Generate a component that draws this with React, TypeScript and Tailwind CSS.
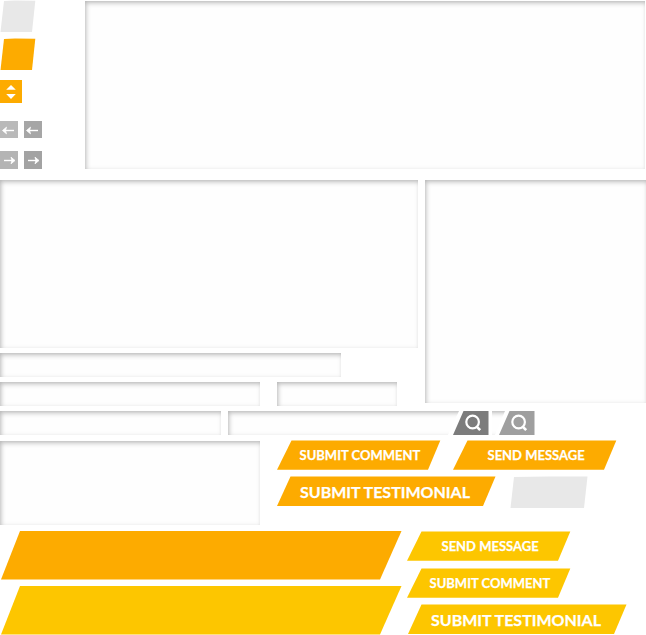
import React from 'react';

function Panel({ className }: { className: string }) {
  return (
    <div
      className={`shrink-0 bg-[#fefefe] shadow-[inset_2px_3px_5px_-1px_rgba(0,0,0,0.24),inset_0_0_4px_rgba(0,0,0,0.08)] ${className}`}
    />
  );
}

function SlantButton({ className, children }: { className: string; children?: React.ReactNode }) {
  return (
    <div className={`shrink-0 whitespace-nowrap text-white font-bold [-webkit-text-stroke:0.25px_white] ${className}`}>{children}</div>
  );
}

function Arrow({ className, right }: { className: string; right?: boolean }) {
  return (
    <div className={`h-[17.5px] w-[18px] shrink-0 ${className}`}>
      <svg width="18" height="18" viewBox="0 0 18 18" fill="none" stroke="white" strokeWidth="1.4">
        {right ? (
          <>
            <path d="M4 9.5h9" />
            <path d="M11 6.2l4 3.3-4 3.3 1-3.3z" fill="white" strokeWidth="0.8" />
          </>
        ) : (
          <>
            <path d="M5 9.5h9" />
            <path d="M6.5 6.2L2.5 9.5l4 3.3-1-3.3z" fill="white" strokeWidth="0.8" />
          </>
        )}
      </svg>
    </div>
  );
}

function Search({ className }: { className: string }) {
  return (
    <div className={`h-6 w-9 shrink-0 [clip-path:polygon(10.5px_0,35.5px_0,35.5px_100%,0_100%)] ${className}`}>
      <svg width="36" height="24" viewBox="0 0 36 24" fill="none" stroke="white">
        <circle cx="19.6" cy="11" r="6.3" strokeWidth="2.2" />
        <path d="M23.5 15.5l3.7 3.7" strokeWidth="2.6" />
      </svg>
    </div>
  );
}

const small = 'h-[30px] w-[164px] text-[13px] leading-[30px]';
const smallClip = '[clip-path:polygon(14.5px_0.6px,163.3px_0.6px,151px_29.8px,0_29.8px)]';
const large = 'h-[30px] w-[219px] pl-[23px] text-[16px] leading-[32px]';
const largeClip = '[clip-path:polygon(13.5px_0.6px,218.5px_0.6px,206px_100%,0_100%)]';
const banner = 'h-[49px] w-[402px] [clip-path:polygon(20px_0,401.5px_0,380px_48.5px,1px_48.5px)]';

export default function App() {
  return (
    <div className="h-[635px] w-[646px] overflow-hidden bg-white font-['Lato',sans-serif]">
      <div className="flex h-[180px]">
        <div className="w-[85px]">
          <div className="h-8 w-9 bg-[#e8e8e8] [clip-path:polygon(4px_1px,15px_0.4px,35.3px_0.7px,32px_100%,0.5px_100%)]" />
          <div className="mt-[6px] h-8 w-9 bg-[#fdab00] [clip-path:polygon(4px_1px,15px_0.4px,35.3px_0.7px,32px_100%,0.5px_100%)]" />
          <div className="mt-[10px] h-[23px] w-[22px] bg-[#fdab00]">
            <svg width="22" height="23" viewBox="0 0 22 23" fill="white">
              <path d="M6.2 9.8L11 4.9l4.8 4.9zM6.2 14L11 18.9l4.8-4.9z" />
            </svg>
          </div>
          <div className="mt-[17.5px] flex gap-[6px]">
            <Arrow className="bg-[#b9b9b9]" />
            <Arrow className="bg-[#a6a6a6]" />
          </div>
          <div className="mt-[13px] flex gap-[6px]">
            <Arrow className="bg-[#b4b4b4]" right />
            <Arrow className="bg-[#a3a3a3]" right />
          </div>
        </div>
        <Panel className="mt-px h-[168px] w-[560px]" />
      </div>

      <div className="flex h-[231px] gap-[7px]">
        <div className="flex w-[418px] flex-col gap-[5px]">
          <Panel className="h-[168px]" />
          <Panel className="h-6 w-[341px]" />
          <div className="flex gap-[17px]">
            <Panel className="h-6 w-[260px]" />
            <Panel className="h-6 w-[120px]" />
          </div>
        </div>
        <Panel className="h-[223px] w-[221px]" />
      </div>

      <div className="flex h-[29px]">
        <Panel className="h-6 w-[221px]" />
        <Panel className="ml-[7px] h-6 w-[240px] [clip-path:polygon(0_0,231px_0,220px_100%,0_100%)]" />
        <Search className="-ml-[15px] bg-[#7c7c7c]" />
        <Panel className="-ml-[7px] h-6 w-[34px] [clip-path:polygon(10px_0,23px_0,13px_100%,10px_100%)]" />
        <Search className="-ml-[17px] bg-[#9f9f9f]" />
      </div>

      <div className="flex h-[91px]">
        <Panel className="mt-px h-[84px] w-[260px]" />
        <div className="ml-[17px]">
          <div className="flex gap-3">
            <SlantButton className={`${small} ${smallClip} bg-[#fdab00] pl-[22.5px]`}>SUBMIT COMMENT</SlantButton>
            <SlantButton className={`${small} ${smallClip} bg-[#fdab00] pl-[34.5px]`}>SEND MESSAGE</SlantButton>
          </div>
          <div className="mt-[6px] flex gap-[14px]">
            <SlantButton className={`${large} ${largeClip} bg-[#fdab00]`}>SUBMIT TESTIMONIAL</SlantButton>
            <div className="h-8 w-[78px] bg-[#e8e8e8] [clip-path:polygon(4px_1px,38px_0.4px,77.5px_0.6px,74px_100%,0.5px_100%)]" />
          </div>
        </div>
      </div>

      <div className="flex h-[104px] gap-[5px]">
        <div className="flex flex-col gap-[6px]">
          <SlantButton className={`${banner} bg-[#fdab00]`} />
          <SlantButton className={`${banner} bg-[#fdc600]`} />
        </div>
        <div>
          <SlantButton className={`${small} ${smallClip} bg-[#fdc600] pl-[34.5px]`}>SEND MESSAGE</SlantButton>
          <SlantButton className={`${small} ${smallClip} mt-[7px] bg-[#fdc600] pl-[22.5px]`}>SUBMIT COMMENT</SlantButton>
          <SlantButton className={`${large} ${largeClip} mt-[6px] ml-px bg-[#fdc600]`}>SUBMIT TESTIMONIAL</SlantButton>
        </div>
      </div>
    </div>
  );
}
